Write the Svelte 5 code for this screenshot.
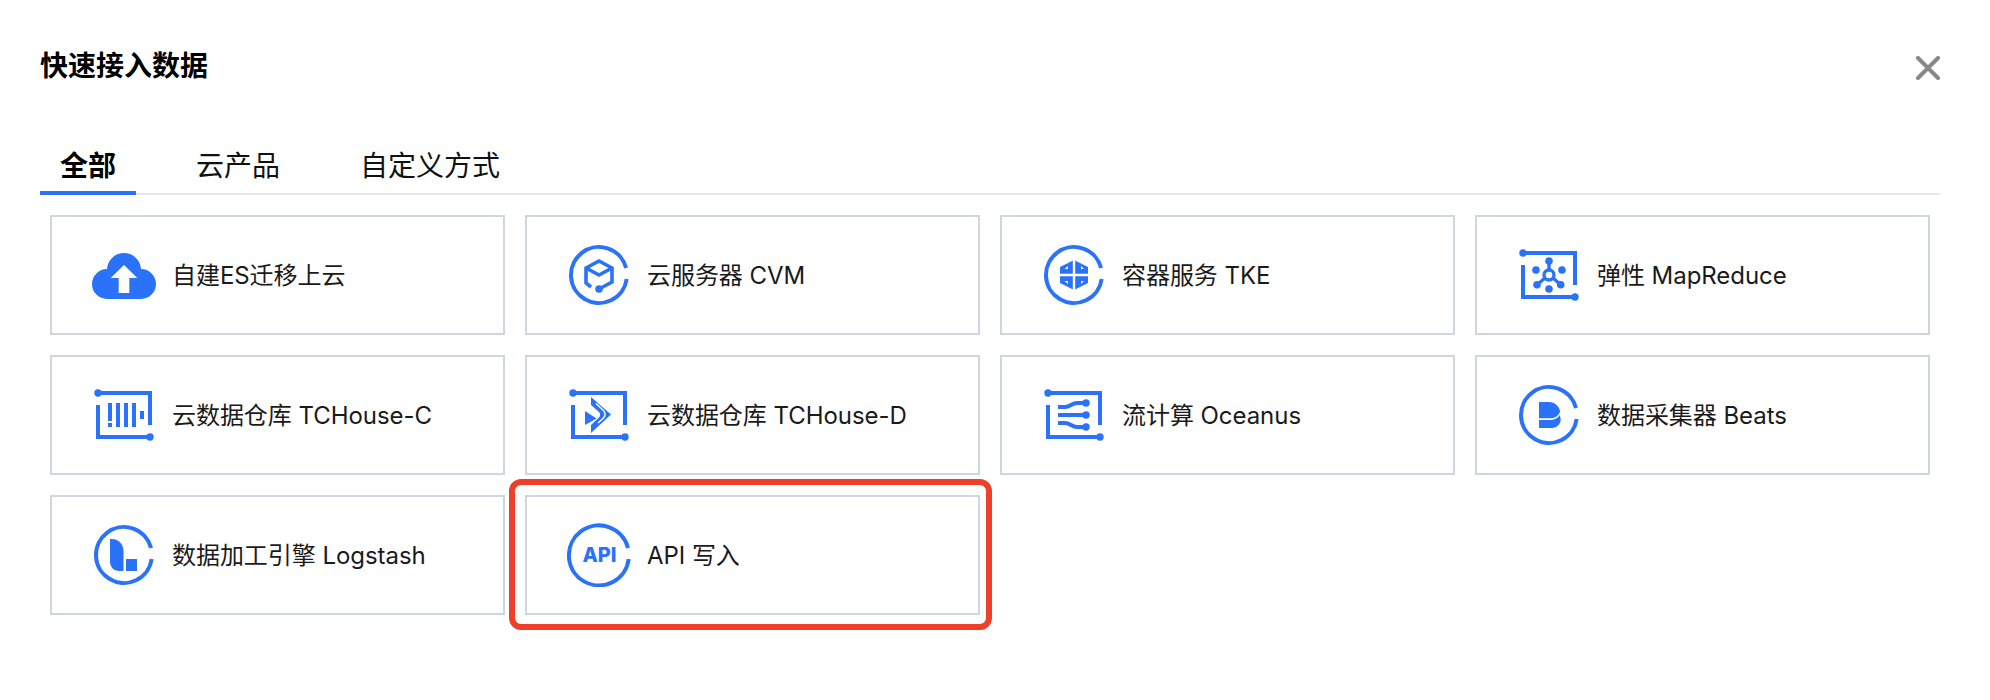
<script>
  const tabs = ['全部', '云产品', '自定义方式'];

  const items = [
    { icon: 'cloud', label: '自建ES迁移上云' },
    { icon: 'cvm', label: '云服务器 CVM' },
    { icon: 'tke', label: '容器服务 TKE' },
    { icon: 'emr', label: '弹性 MapReduce' },
    { icon: 'chouse', label: '云数据仓库 TCHouse-C' },
    { icon: 'dhouse', label: '云数据仓库 TCHouse-D' },
    { icon: 'oceanus', label: '流计算 Oceanus' },
    { icon: 'beats', label: '数据采集器 Beats' },
    { icon: 'logstash', label: '数据加工引擎 Logstash' },
    { icon: 'api', label: 'API 写入', marked: true }
  ];

  const ringed = ['cvm', 'tke', 'beats', 'logstash'];
  const framed = ['emr', 'chouse', 'dhouse', 'oceanus'];
</script>

<div class="dialog">
  <header class="dialog__head">
    <h2 class="dialog__title">快速接入数据</h2>
    <svg class="dialog__close" width="24" height="24" viewBox="0 0 24 24">
      <path d="M2 2 L22 22 M22 2 L2 22" />
    </svg>
  </header>

  <nav class="tabs">
    {#each tabs as tab, i}
      <div class="tabs__item" class:tabs__item--active={i === 0}>{tab}</div>
    {/each}
  </nav>

  <div class="grid">
    {#each items as item}
      <div class="card">
        <svg class="icon" width="64" height="64" viewBox="0 0 64 64">
          {#if ringed.includes(item.icon)}
            <path class="line" d="M59.1 25 A28 28 0 1 0 59.7 36" />
          {/if}
          {#if framed.includes(item.icon)}
            <path class="line" d="M6 10 H58 V42 M6 22 V54 H58" />
            <circle class="solid" cx="6" cy="10" r="3.7" />
            <circle class="solid" cx="58" cy="54" r="3.7" />
          {/if}

          {#if item.icon === 'cloud'}
            <g class="solid">
              <circle cx="15" cy="41" r="15" />
              <circle cx="49" cy="41" r="15" />
              <circle cx="32" cy="27" r="17" />
              <rect x="15" y="28" width="34" height="28" />
            </g>
            <path class="white" d="M32 22 L45.3 35 H37.3 V50 H26.7 V35 H18.7 Z" />
          {:else if item.icon === 'cvm'}
            <path class="line line--cube" d="M24 44 L19 40 V25 L32 18 L45 25 V39 L32 46" />
            <path class="line line--cube" d="M19 25 L32 32 L45 25" />
            <circle class="solid" cx="32" cy="46" r="3.8" />
          {:else if item.icon === 'tke'}
            <path class="solid" d="M32 17 L46 24 V40 L32 47 L18 40 V24 Z" />
            <path class="gap" d="M32 15 V49 M16 32 H48" />
            <path class="white" d="M26 23 V26 H22.5 Z M39 23 V26 H42 Z M26 38 V41 L22.5 38 Z M39 38 V41 L42 38 Z" />
          {:else if item.icon === 'emr'}
            <circle class="line line--mid" cx="32" cy="32" r="5" />
            <path class="line line--mid" d="M32 18 V27 M20 41.7 L28 35 M43.7 41.7 L36 35" />
            <g class="solid">
              <circle cx="32" cy="18" r="3.8" />
              <circle cx="19" cy="27" r="3.8" />
              <circle cx="45" cy="27" r="3.8" />
              <circle cx="20" cy="41.7" r="3.8" />
              <circle cx="43.7" cy="41.7" r="3.8" />
              <circle cx="32" cy="46" r="3.8" />
            </g>
          {:else if item.icon === 'chouse'}
            <g class="solid">
              <rect x="16" y="20" width="4" height="18" />
              <rect x="16" y="40" width="4" height="4" />
              <rect x="24" y="20" width="4" height="24" />
              <rect x="32" y="20" width="4" height="24" />
              <rect x="40" y="20" width="4" height="24" />
              <rect x="48" y="28" width="4" height="8" />
            </g>
          {:else if item.icon === 'dhouse'}
            <path class="solid" d="M24 14 L44 31.5 L24 50 V42 L32 34.5 C33.5 33 33.5 30.5 32 29 L24 22 Z" />
            <path class="solid" d="M18 28 L29.5 35.5 L18 42 Z" />
            <path class="gap gap--thin" d="M29 20.5 L36.5 27.5 C38.5 29.5 38.5 33 36.5 35 L31 40" />
          {:else if item.icon === 'oceanus'}
            <path class="line" d="M16 24 H23 C28 24 30 20 35 20 H44 M16 32 H44 M16 40 H23 C28 40 30 44 35 44 H44" />
            <circle class="solid" cx="44" cy="20" r="3.7" />
            <circle class="solid" cx="44" cy="32" r="3.7" />
            <circle class="solid" cx="44" cy="44" r="3.7" />
          {:else if item.icon === 'beats'}
            <path class="solid" d="M22 19 H32 C38 19 43 24 43 29 C41 33 38 35.3 33 35.3 H22 Z" />
            <path class="solid" d="M22 37 H33 C37 37 41 35.5 42.5 32 C43.5 34 44 36 43.5 38 C43 42 39 45 35 45 H22 Z" />
          {:else if item.icon === 'logstash'}
            <path class="solid" d="M18 16 H20 C27 16 31.5 22 31.5 28 V48 H27 C22 48 18 44 18 39 Z" />
            <rect class="solid" x="34" y="36" width="11" height="12" />
          {:else if item.icon === 'api'}
            <path class="line" d="M61 25 A30 30 0 1 0 61.7 36" />
            <text class="icon__text" x="32.5" y="39">API</text>
          {/if}
        </svg>
        <span class="card__label">{item.label}</span>
        {#if item.marked}
          <div class="card__mark"></div>
        {/if}
      </div>
    {/each}
  </div>
</div>

<style>
  :global(body) {
    background: #fff;
  }

  .dialog {
    width: 1990px;
    height: 700px;
    font-family: Inter, "Noto Sans CJK SC", sans-serif;
    color: #111;
  }

  .dialog__head {
    display: flex;
    justify-content: space-between;
    align-items: center;
    padding: 46px 50px 0 40px;
  }

  .dialog__title {
    margin: 0;
    font-size: 28px;
    line-height: 40px;
    font-weight: 600;
    color: #000;
  }

  .dialog__close {
    margin-top: 4px;
  }

  .dialog__close path {
    fill: none;
    stroke: #888;
    stroke-width: 4;
    stroke-linecap: round;
  }

  .tabs {
    display: flex;
    gap: 40px;
    margin: 60px 50px 0 40px;
    border-bottom: 2px solid #e6e7ef;
    height: 47px;
  }

  .tabs__item {
    box-sizing: border-box;
    height: 49px;
    padding: 0 20px;
    font-size: 28px;
    line-height: 40px;
    color: #111;
    border-bottom: 4px solid transparent;
  }

  .tabs__item--active {
    font-weight: 600;
    color: #000;
    border-bottom-color: #2a72fa;
  }

  .grid {
    display: grid;
    grid-template-columns: repeat(4, 455px);
    grid-auto-rows: 120px;
    gap: 20px;
    padding: 20px 0 0 50px;
  }

  .card {
    position: relative;
    box-sizing: border-box;
    display: flex;
    align-items: center;
    gap: 16px;
    padding-left: 40px;
    border: 2px solid #d0d5e1;
  }

  .card__label {
    margin-top: -3px;
    font-size: 24px;
    letter-spacing: -0.05px;
    color: #1a1a1a;
    white-space: nowrap;
  }

  .card__mark {
    position: absolute;
    left: -18px;
    top: -18px;
    right: -14px;
    bottom: -17px;
    border: 6px solid #ee4028;
    border-radius: 12px;
  }

  .icon {
    flex: none;
  }

  .line {
    fill: none;
    stroke: #2a72fa;
    stroke-width: 4;
  }

  .line--cube {
    stroke-width: 3.6;
  }

  .line--mid {
    stroke-width: 3.4;
  }

  .solid {
    fill: #2a72fa;
  }

  .white {
    fill: #fff;
  }

  .gap {
    fill: none;
    stroke: #fff;
    stroke-width: 2.4;
  }

  .gap--thin {
    stroke-width: 1.4;
  }

  .icon__text {
    font-family: Inter, sans-serif;
    font-size: 20px;
    font-weight: 800;
    fill: #2a72fa;
    text-anchor: middle;
  }
</style>
